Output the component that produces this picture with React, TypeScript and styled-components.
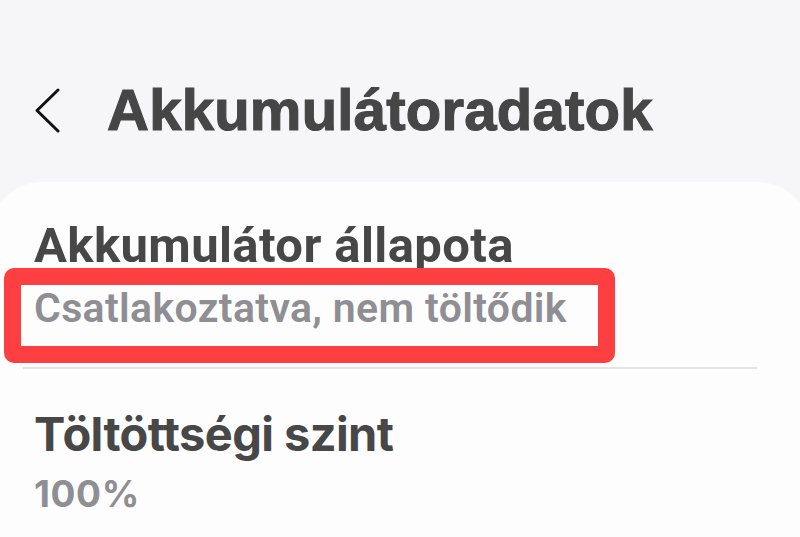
import React from 'react';
import styled, { createGlobalStyle } from 'styled-components';

const GlobalStyle = createGlobalStyle`
  html, body {
    margin: 0;
    padding: 0;
    background: #f6f6f8;
  }
`;

const Page = styled.div`
  width: 800px;
  height: 537px;
  overflow: hidden;
  background: #f6f6f8;
`;

const Header = styled.header`
  display: flex;
  align-items: center;
  padding: 81px 0 0 35px;
  height: 58px;
`;

const BackButton = styled.button`
  display: flex;
  align-items: center;
  justify-content: center;
  width: 28px;
  height: 48px;
  padding: 0;
  border: none;
  background: transparent;
  margin-right: 44px;
`;

const Title = styled.h1`
  margin: 0;
  font-family: 'Liberation Sans', Arial, sans-serif;
  font-weight: 700;
  font-size: 58px;
  line-height: 58px;
  color: #464646;
  -webkit-text-stroke: 1.2px #464646;
  letter-spacing: 0.25px;
`;

const Card = styled.section`
  margin: 43px -10px 0;
  width: 820px;
  background: #fdfdfe;
  border-radius: 52px;
  padding-top: 35px;
  min-height: 400px;
`;

const Item = styled.div<{ $top?: number }>`
  padding: 0 44px;
  margin-top: ${(p) => p.$top ?? 0}px;
`;

const ItemTitle = styled.div<{ $geo?: boolean }>`
  font-family: ${(p) => (p.$geo ? "Inter, 'Open Sans'" : 'Roboto')}, sans-serif;
  font-weight: 700;
  font-size: ${(p) => (p.$geo ? 47 : 49)}px;
  line-height: ${(p) => (p.$geo ? 56 : 58)}px;
  color: #474747;
  letter-spacing: ${(p) => (p.$geo ? '-0.6px' : '0.4px')};
`;

const SubWrap = styled.div<{ $top: number }>`
  position: relative;
  margin-top: ${(p) => p.$top}px;
`;

const ItemValue = styled.div<{ $geo?: boolean }>`
  font-family: ${(p) => (p.$geo ? "Inter, 'Open Sans'" : 'Roboto')}, sans-serif;
  font-weight: ${(p) => (p.$geo ? 700 : 600)};
  font-size: ${(p) => (p.$geo ? 37 : 41)}px;
  line-height: ${(p) => (p.$geo ? 44 : 48)}px;
  color: #8e8e93;
  letter-spacing: ${(p) => (p.$geo ? '0.6px' : '0.35px')};
`;

const Highlight = styled.div`
  position: absolute;
  left: -30px;
  top: -16px;
  width: 611px;
  height: 95px;
  box-sizing: border-box;
  border: 17px solid #fe3f42;
  border-radius: 10px;
  pointer-events: none;
`;

const Divider = styled.hr`
  margin: 35px 53px 0 33px;
  border: none;
  height: 2px;
  background: #e3e3e6;
`;

export default function App() {
  return (
    <Page>
      <GlobalStyle />
      <Header>
        <BackButton aria-label="Vissza">
          <svg width="28" height="48" viewBox="0 0 28 48">
            <polyline
              points="23,4 2,24.5 23,45"
              fill="none"
              stroke="#111"
              strokeWidth="3"
              strokeLinecap="round"
              strokeLinejoin="round"
            />
          </svg>
        </BackButton>
        <Title>Akkumulátoradatok</Title>
      </Header>
      <Card>
        <Item>
          <ItemTitle>Akkumulátor állapota</ItemTitle>
          <SubWrap $top={9}>
            <ItemValue>Csatlakoztatva, nem töltődik</ItemValue>
            <Highlight />
          </SubWrap>
        </Item>
        <Divider />
        <Item $top={37}>
          <ItemTitle $geo>Töltöttségi szint</ItemTitle>
          <SubWrap $top={10}>
            <ItemValue $geo>100%</ItemValue>
          </SubWrap>
        </Item>
      </Card>
    </Page>
  );
}
